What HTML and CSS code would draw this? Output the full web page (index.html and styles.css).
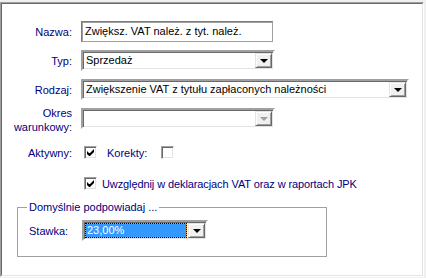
FILE: index.html
```html
<!DOCTYPE html>
<html lang="pl">
<head>
    <meta charset="UTF-8">
    <title>Rodzaj VAT</title>
    <link rel="stylesheet" href="styles.css">
</head>
<body>
    <div class="panel">
        <div class="frame">
            <div class="row">
                <span class="label">Nazwa:</span>
                <div class="edit nazwa">Zwiększ. VAT należ. z tyt. należ.</div>
            </div>
            <div class="row">
                <span class="label">Typ:</span>
                <div class="combo short">
                    <span class="value">Sprzedaż</span>
                    <span class="drop"><i class="arrow"></i></span>
                </div>
            </div>
            <div class="row">
                <span class="label">Rodzaj:</span>
                <div class="combo wide">
                    <span class="value">Zwiększenie VAT z tytułu zapłaconych należności</span>
                    <span class="drop"><i class="arrow"></i></span>
                </div>
            </div>
            <div class="row">
                <span class="label two-line">Okres<br>warunkowy:</span>
                <div class="combo short disabled">
                    <span class="value"></span>
                    <span class="drop"><i class="arrow"></i></span>
                </div>
            </div>

            <div class="check-row first">
                <span class="label">Aktywny:</span>
                <span class="check checked"><svg width="7" height="7" viewBox="0 0 7 7"><path d="M0 2v3l2 2h1l4-4v-3l-4 4h-1z" fill="#000"/></svg></span>
                <span class="check-label">Korekty:</span>
                <span class="check"></span>
            </div>
            <div class="check-row second">
                <span class="label"></span>
                <span class="check checked"><svg width="7" height="7" viewBox="0 0 7 7"><path d="M0 2v3l2 2h1l4-4v-3l-4 4h-1z" fill="#000"/></svg></span>
                <span class="check-text">Uwzględnij w deklaracjach VAT oraz w raportach JPK</span>
            </div>

            <fieldset class="group">
                <legend>Domyślnie podpowiadaj ...</legend>
                <div class="stawka-row">
                    <span class="stawka-label">Stawka:</span>
                    <div class="combo stawka">
                        <span class="value focus">23,00%</span>
                        <span class="drop"><i class="arrow"></i></span>
                    </div>
                </div>
            </fieldset>
        </div>
    </div>
</body>
</html>
```

FILE: styles.css
```css
body {
    margin: 0;
    background-color: #f0f0f0;
    font-family: "Liberation Sans", Arial, sans-serif;
    font-size: 11px;
}
.panel {
    margin-top: 2px;
    width: 424px;
    height: 275px;
    box-sizing: border-box;
    border: 1px solid;
    border-color: #a0a0a0 #ffffff #ffffff #a0a0a0;
}
.frame {
    height: 100%;
    box-sizing: border-box;
    border: 1px solid;
    border-color: #696969 #e3e3e3 #e3e3e3 #696969;
    background: #fff;
    padding-top: 17px;
}
.row {
    display: flex;
    align-items: center;
    height: 21px;
    margin-bottom: 8px;
}
.label {
    width: 70px;
    margin-right: 9px;
    text-align: right;
    color: #000080;
    flex-shrink: 0;
}
.two-line {
    line-height: 14px;
    padding-top: 2px;
}
.edit {
    height: 21px;
    box-sizing: border-box;
    border: 1px solid #7a7a7a;
    border-right-color: #a0a0a0;
    border-bottom-color: #a0a0a0;
    box-shadow: inset 1px 1px #a0a0a0;
    padding: 0 3px;
    line-height: 19px;
    color: #000;
}
.nazwa {
    width: 192px;
}
.combo {
    display: flex;
    height: 21px;
    box-sizing: border-box;
    border: 2px solid;
    border-color: #a0a0a0 #ffffff #ffffff #a0a0a0;
    box-shadow: inset 1px 1px #696969, inset -1px -1px #e3e3e3;
    padding: 1px;
    background: #fff;
}
.short {
    width: 194px;
}
.wide {
    width: 328px;
}
.combo .value {
    flex: 1;
    padding-left: 2px;
    line-height: 15px;
    color: #000;
    white-space: nowrap;
    overflow: hidden;
}
.drop {
    width: 17px;
    height: 15px;
    box-sizing: border-box;
    display: flex;
    align-items: center;
    justify-content: center;
    background: #f0f0f0;
    border: 1px solid;
    border-color: #e3e3e3 #696969 #696969 #e3e3e3;
    box-shadow: inset 1px 1px #fff, inset -1px -1px #a0a0a0;
    margin-left: 1px;
    flex-shrink: 0;
}
.arrow {
    width: 0;
    height: 0;
    border-left: 4px solid transparent;
    border-right: 4px solid transparent;
    border-top: 4px solid #000;
    margin-top: 1px;
}
.disabled .arrow {
    border-top-color: #a0a0a0;
}
.check-row {
    display: flex;
    align-items: center;
    height: 13px;
}
.check-row.first {
    margin-top: 17px;
}
.check-row.second {
    margin-top: 18px;
}
.check {
    width: 13px;
    height: 13px;
    box-sizing: border-box;
    margin-left: 3px;
    border: 1px solid;
    border-color: #a0a0a0 #ffffff #ffffff #a0a0a0;
    box-shadow: inset 1px 1px #696969, inset -1px -1px #e3e3e3;
    background: #fff;
    display: flex;
    align-items: center;
    justify-content: center;
    flex-shrink: 0;
}
.check svg {
    display: block;
}
.check-label {
    width: 54px;
    margin-left: 10px;
    color: #000080;
    flex-shrink: 0;
}
.check-row .check-label + .check {
    margin-left: 0;
}
.check-text {
    margin-left: 5px;
    color: #000080;
    letter-spacing: -0.1px;
}
.group {
    margin: 11px 0 0 15px;
    width: 310px;
    box-sizing: border-box;
    border: 1px solid #a0a0a0;
    padding: 6px 8px 15px 8px;
}
.group legend {
    margin-left: 1px;
    padding: 0 2px;
    color: #000080;
    line-height: 13px;
}
.stawka-row {
    display: flex;
    align-items: center;
    padding-left: 3px;
}
.stawka-label {
    width: 53px;
    color: #000080;
}
.stawka {
    width: 126px;
}
.combo .focus {
    color: #fff;
    border: 1px dotted #000;
    background: linear-gradient(#3399ff, #3399ff) padding-box, linear-gradient(#e8a040, #e8a040) border-box;
    line-height: 13px;
    padding-left: 1px;
}
```
